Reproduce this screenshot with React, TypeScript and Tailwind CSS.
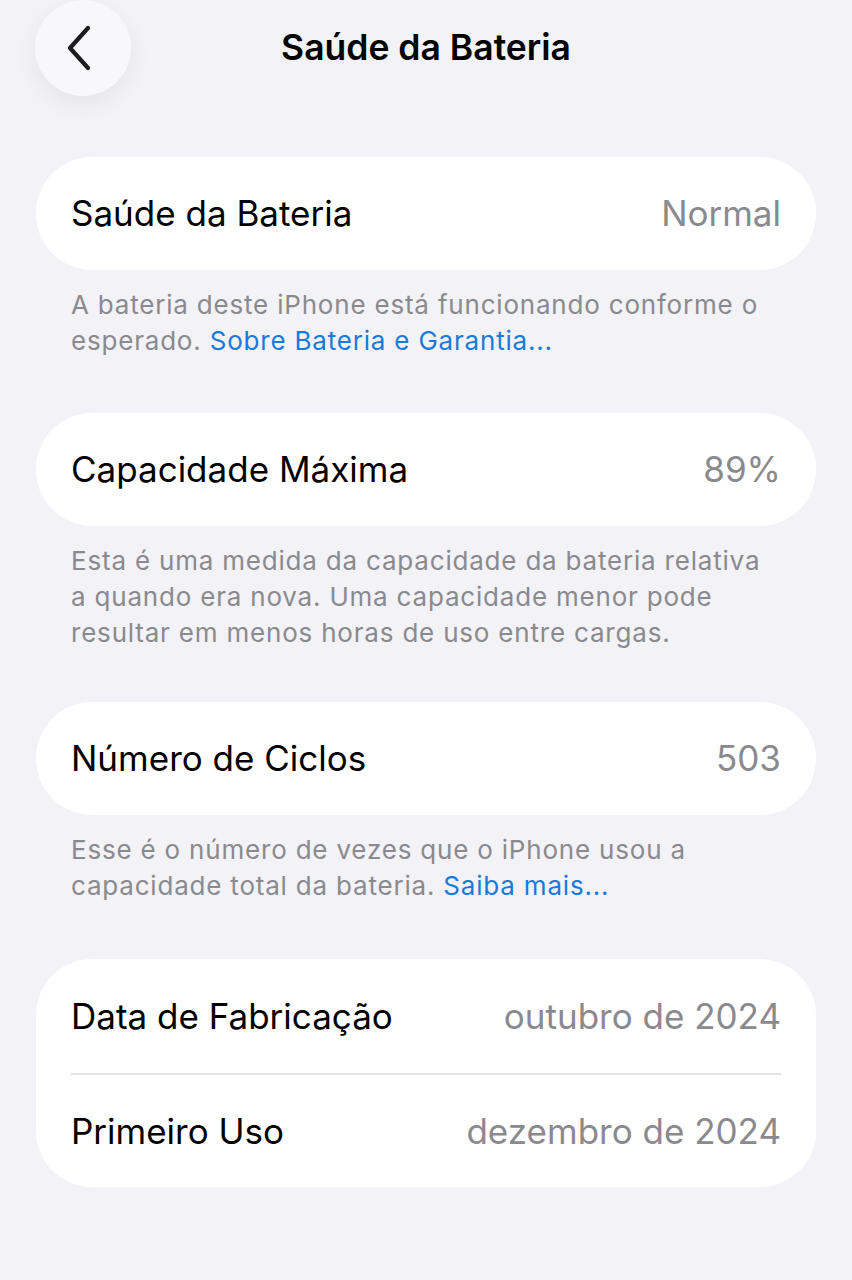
// iOS Settings › Bateria › Saúde da Bateria

type Row = { label: string; value: string };

function Card({ rows }: { rows: Row[] }) {
  return (
    <div className="mx-[36px] rounded-[56px] bg-white px-[35px]">
      {rows.map((r, i) => (
        <div
          key={r.label}
          className={
            "flex items-center justify-between " +
            (rows.length > 1 ? "h-[114px]" : "h-[113px]") +
            (i > 0 ? " border-t-2 border-[#e3e3e8]" : "")
          }
        >
          <span className="text-[35px] text-black">{r.label}</span>
          <span className="text-[35px] text-[#8a8a8e]">{r.value}</span>
        </div>
      ))}
    </div>
  );
}

function Footer({ children }: { children: React.ReactNode }) {
  return (
    <p className="pl-[71px] pr-[74px] pt-[17px] text-[26px] leading-[36px] tracking-[0.8px] text-[#8a8a8e]">
      {children}
    </p>
  );
}

function Link({ children }: { children: React.ReactNode }) {
  return <span className="text-[#1a7ad9]">{children}</span>;
}

export default function App() {
  return (
    <div
      className="min-h-[1280px] w-[852px] bg-[#f2f2f7]"
      style={{ fontFamily: "Inter, 'Noto Sans', sans-serif" }}
    >
      <header className="relative flex h-[96px] items-center justify-center">
        <button
          type="button"
          className="absolute left-[35px] top-0 flex h-[96px] w-[96px] items-center justify-center rounded-full bg-[#f8f8fa] shadow-[0_8px_24px_rgba(0,0,0,0.06)]"
        >
          <svg width="26" height="46" viewBox="0 0 26 46" className="-ml-[8px]">
            <path
              d="M22 3 L4 23 L22 43"
              fill="none"
              stroke="#1c1c1e"
              strokeWidth="4.2"
              strokeLinecap="round"
              strokeLinejoin="round"
            />
          </svg>
        </button>
        <h1 className="text-[35.5px] font-semibold text-black">Saúde da Bateria</h1>
      </header>

      <div className="pt-[61px]">
        <Card rows={[{ label: "Saúde da Bateria", value: "Normal" }]} />
        <Footer>
          A bateria deste iPhone está funcionando conforme o esperado.{" "}
          <Link>Sobre Bateria e Garantia...</Link>
        </Footer>
      </div>

      <div className="pt-[54px]">
        <Card rows={[{ label: "Capacidade Máxima", value: "89%" }]} />
        <Footer>
          Esta é uma medida da capacidade da bateria relativa a quando era nova. Uma
          capacidade menor pode resultar em menos horas de uso entre cargas.
        </Footer>
      </div>

      <div className="pt-[51px]">
        <Card rows={[{ label: "Número de Ciclos", value: "503" }]} />
        <Footer>
          Esse é o número de vezes que o iPhone usou a capacidade total da bateria.{" "}
          <Link>Saiba mais...</Link>
        </Footer>
      </div>

      <div className="pt-[55px]">
        <Card
          rows={[
            { label: "Data de Fabricação", value: "outubro de 2024" },
            { label: "Primeiro Uso", value: "dezembro de 2024" },
          ]}
        />
      </div>
    </div>
  );
}
